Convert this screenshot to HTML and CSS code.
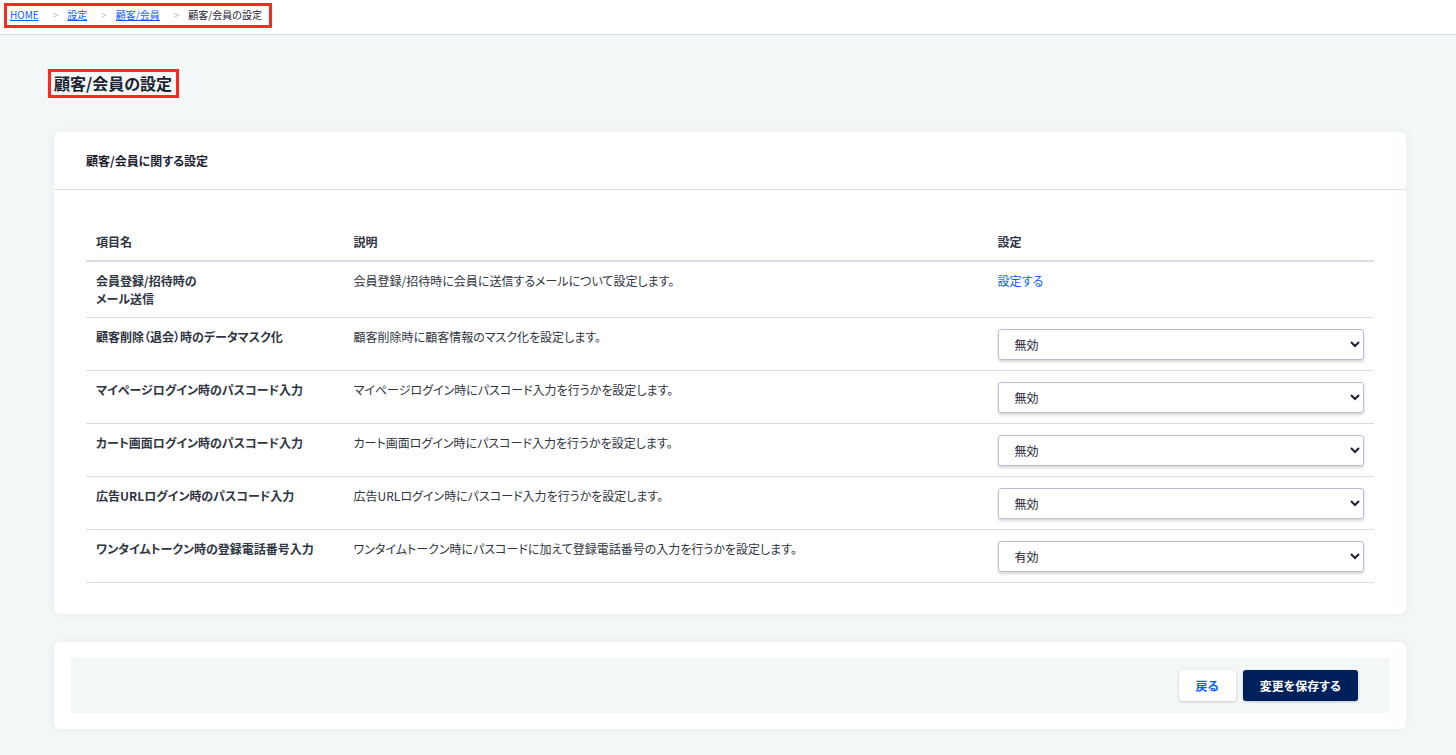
FILE: index.html
```html
<!DOCTYPE html>
<html lang="ja">
<head>
  <meta charset="UTF-8">
  <meta name="viewport" content="width=device-width, initial-scale=1.0">
  <title>顧客/会員の設定</title>
  <link rel="stylesheet" href="styles.css">
</head>
<body>
  <header class="header">
    <nav class="marked">
      <ol class="breadcrumb">
        <li><a href="#">HOME</a></li>
        <li><a href="#">設定</a></li>
        <li><a href="#">顧客/会員</a></li>
        <li>顧客/会員の設定</li>
      </ol>
    </nav>
  </header>

  <main class="container">
    <h1 class="page-title marked">顧客/会員の設定</h1>

    <form>
      <section class="card">
        <h2 class="card-title">顧客/会員に関する設定</h2>
        <div class="card-body">
          <table class="table">
            <thead>
              <tr>
                <th class="col-name" scope="col">項目名</th>
                <th class="col-description" scope="col">説明</th>
                <th class="col-setting" scope="col">設定</th>
              </tr>
            </thead>
            <tbody>
              <tr>
                <th scope="row">会員登録/招待時の<br>メール送信</th>
                <td>会員登録/招待時に会員に送信するメールについて設定します。</td>
                <td><a class="link" href="#">設定する</a></td>
              </tr>
              <tr>
                <th scope="row"><label for="mask">顧客削除（退会）時のデータマスク化</label></th>
                <td>顧客削除時に顧客情報のマスク化を設定します。</td>
                <td>
                  <select class="select" id="mask">
                    <option selected>無効</option>
                    <option>有効</option>
                  </select>
                </td>
              </tr>
              <tr>
                <th scope="row"><label for="mypage">マイページログイン時のパスコード入力</label></th>
                <td>マイページログイン時にパスコード入力を行うかを設定します。</td>
                <td>
                  <select class="select" id="mypage">
                    <option selected>無効</option>
                    <option>有効</option>
                  </select>
                </td>
              </tr>
              <tr>
                <th scope="row"><label for="cart">カート画面ログイン時のパスコード入力</label></th>
                <td>カート画面ログイン時にパスコード入力を行うかを設定します。</td>
                <td>
                  <select class="select" id="cart">
                    <option selected>無効</option>
                    <option>有効</option>
                  </select>
                </td>
              </tr>
              <tr>
                <th scope="row"><label for="ad-url">広告URLログイン時のパスコード入力</label></th>
                <td>広告URLログイン時にパスコード入力を行うかを設定します。</td>
                <td>
                  <select class="select" id="ad-url">
                    <option selected>無効</option>
                    <option>有効</option>
                  </select>
                </td>
              </tr>
              <tr>
                <th scope="row"><label for="token">ワンタイムトークン時の登録電話番号入力</label></th>
                <td>ワンタイムトークン時にパスコードに加えて登録電話番号の入力を行うかを設定します。</td>
                <td>
                  <select class="select" id="token">
                    <option>無効</option>
                    <option selected>有効</option>
                  </select>
                </td>
              </tr>
            </tbody>
          </table>
        </div>
      </section>

      <section class="card card-actions">
        <div class="actions">
          <button class="button" type="button">戻る</button>
          <button class="button button-primary" type="submit">変更を保存する</button>
        </div>
      </section>
    </form>
  </main>
</body>
</html>
```

FILE: styles.css
```css
* {
  box-sizing: border-box;
}

body {
  margin: 0;
  background-color: #f3f7f8;
  color: #2f3542;
  font-family: "Noto Sans CJK JP", sans-serif;
  font-size: 12px;
  line-height: 18px;
  font-feature-settings: "palt";
}

a {
  color: #0b5cff;
}

.marked {
  border: 3px solid #fb2a20;
}

/* Header */
.header {
  display: flex;
  align-items: flex-start;
  padding: 3px 4px 6px;
  background-color: #fff;
  border-bottom: 1px solid #d9dce6;
}

.breadcrumb {
  display: flex;
  margin: 0;
  padding: 0 7px 1px 3px;
  list-style: none;
  color: #1d212f;
  font-size: 10px;
}

.breadcrumb li + li::before {
  content: ">";
  padding: 0 9px 0 14px;
  color: #b9bcc8;
}

/* Main */
.container {
  padding: 34px 50px 26px 48px;
}

.page-title {
  width: fit-content;
  margin: 0 0 34px;
  padding: 0 4px 0 3px;
  color: #1d212f;
  font-size: 16px;
  line-height: 23px;
}

.card {
  margin: 0 0 28px 6px;
  background-color: #fff;
  border-radius: 6px;
  box-shadow: 0 0 8px rgba(0, 60, 80, 0.06);
}

.card-title {
  margin: 0;
  padding: 20px 32px 19px;
  border-bottom: 1px solid #d9dde2;
  color: #1d212f;
  font-size: 12px;
}

.card-body {
  padding: 32px 32px 31px;
}

.table {
  width: 100%;
  border-collapse: collapse;
  table-layout: fixed;
}

.table th,
.table td {
  padding: 10px;
  border-bottom: 1px solid #d9dce6;
  text-align: left;
  vertical-align: top;
}

.table thead th {
  padding: 11px 10px 9px;
  border-bottom: 2px solid #d9dce6;
}

.table tbody tr:first-child th {
  padding-bottom: 9px;
}

.col-name {
  width: 20%;
}

.col-description {
  width: 50%;
}

.col-setting {
  width: 30%;
}

.link {
  text-decoration: none;
}

.select {
  display: block;
  width: 100%;
  height: 31px;
  margin: 1px 0 0;
  padding: 0 0 0 12px;
  border: 1px solid #b9bfd0;
  border-radius: 3px;
  background-color: #fff;
  box-shadow: 0 2px 3px rgba(0, 0, 0, 0.16);
  color: #1d212f;
  font-family: inherit;
  font-size: 12px;
}

/* Buttons */
.card-actions {
  margin-bottom: 0;
  padding: 16px 17px;
}

.actions {
  display: flex;
  justify-content: flex-end;
  gap: 7px;
  padding: 12px 31px;
  background-color: #f3f7f8;
}

.button {
  height: 31px;
  padding: 0 17px;
  border: none;
  border-radius: 3px;
  background-color: #fff;
  box-shadow: 0 1px 3px rgba(0, 0, 0, 0.2);
  color: #0b5cff;
  cursor: pointer;
  font-family: inherit;
  font-size: 12px;
  font-weight: bold;
  font-feature-settings: inherit;
}

.button-primary {
  background-color: #00205b;
  color: #fff;
}
```
